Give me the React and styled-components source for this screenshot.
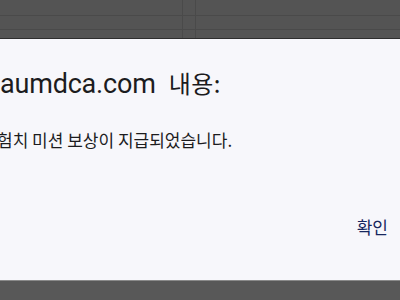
import React from 'react';
import styled, { createGlobalStyle } from 'styled-components';

const GlobalStyle = createGlobalStyle`
    html, body {
        margin: 0;
        padding: 0;
        width: 400px;
        height: 300px;
        overflow: hidden;
        background: #565656;
    }
    * {
        box-sizing: border-box;
    }
`

const Page = styled.div`
    display: flex;
    flex-direction: column;
    width: 400px;
    height: 300px;
    font-family: "Noto Sans", "Noto Sans CJK KR", sans-serif;
`

const Backdrop = styled.div`
    display: grid;
    grid-template-columns: 182px 14px 1fr;
    height: 39px;
    background: #545454;
    border-bottom: 1px solid #2e2e2e;
`

const Column = styled.div`
    display: flex;
    flex-direction: column;
    border-left: ${p => p.divider ? '1px solid #4a4a4a' : 'none'};
    border-right: ${p => p.divider ? '1px solid #4a4a4a' : 'none'};
`

const Strip = styled.div`
    height: ${p => p.h}px;
    border-bottom: ${p => p.line ? '1px solid #4a4a4a' : 'none'};
`

const Dialog = styled.div`
    display: flex;
    flex-direction: column;
    height: 241px;
    background: #f7f7fb;
    padding: 28px 12px 0 0;
`

const Title = styled.h1`
    display: flex;
    align-items: baseline;
    margin: 0;
    font-weight: 400;
    line-height: 32px;
    color: #1c1c1e;
    white-space: nowrap;
`

const Domain = styled.span`
    font-family: Roboto, "Noto Sans", sans-serif;
    font-size: 27px;
    letter-spacing: -0.2px;
`

const Label = styled.span`
    margin-left: 13px;
    font-family: "Noto Sans CJK KR", sans-serif;
    font-size: 24px;
    letter-spacing: 0.5px;
`

const Message = styled.p`
    margin: 28px 0 0 -3px;
    font-family: "Noto Sans CJK KR", sans-serif;
    font-size: 17px;
    line-height: 24px;
    color: #1c1c1e;
    white-space: nowrap;
`

const Actions = styled.div`
    display: flex;
    justify-content: flex-end;
    margin-top: 63px;
`

const OkButton = styled.button`
    border: none;
    background: none;
    padding: 0;
    font-family: "Noto Sans CJK KR", sans-serif;
    font-size: 17px;
    line-height: 24px;
    color: #17275e;
    cursor: pointer;
`

const Footer = styled.div`
    flex: 1;
    background: #585858;
    border-top: 1px solid #8a8a8a;
`

function Backgrounds() {
    return (
        <Backdrop>
            {[false, true, false].map((divider, i) => (
                <Column key={i} divider={divider}>
                    <Strip h={16} line />
                    <Strip h={14} line />
                    <Strip h={8} />
                </Column>
            ))}
        </Backdrop>
    )
}

export default function App() {
    return (
        <>
            <GlobalStyle />
            <Page>
                <Backgrounds />
                <Dialog>
                    <Title>
                        <Domain>aumdca.com</Domain>
                        <Label>내용:</Label>
                    </Title>
                    <Message>험치 미션 보상이 지급되었습니다.</Message>
                    <Actions>
                        <OkButton>확인</OkButton>
                    </Actions>
                </Dialog>
                <Footer />
            </Page>
        </>
    )
}
